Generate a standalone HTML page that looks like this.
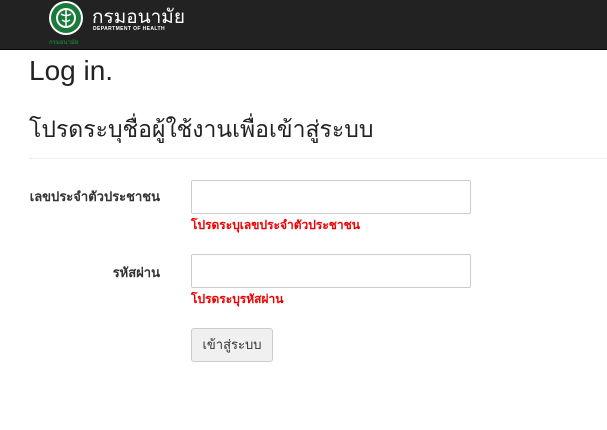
<!DOCTYPE html>
<html><head><meta charset="utf-8"><style>
body{margin:0;width:607px;height:430px;background:#fff;font-family:"Liberation Sans","DejaVu Sans",sans-serif;color:#333;overflow:hidden;position:relative}
.nav{position:absolute;left:0;top:0;width:607px;height:49px;background:#222;border-bottom:1px solid #080808}
.a{position:absolute;white-space:nowrap}
.inp{position:absolute;left:191px;width:278px;height:32px;border:1px solid #ccc;border-radius:2px;background:#fff}
.err{color:#e00;font-size:12px;font-weight:bold}
.lbl{font-size:13px;font-weight:bold;text-align:right;width:140px}
</style></head><body>
<div class="nav">
 <svg class="a" style="left:47px;top:1px" width="40" height="47" viewBox="0 0 40 47">
  <circle cx="19" cy="17" r="17" fill="#fff"/>
  <circle cx="19" cy="17" r="15" fill="#1a7a3a"/>
  <circle cx="19" cy="17" r="10" fill="#fff"/>
  <circle cx="19" cy="17" r="8" fill="#1a7a3a"/>
  <path d="M19 8v18M14 13c3 2 7 2 10 0M15 19c3 2 5 2 8 0" stroke="#fff" stroke-width="1.5" fill="none"/>
  <text x="2" y="43" font-size="6" fill="#1a9a3a" font-family="sans-serif">กรมอนามัย</text>
 </svg>
 <div class="a" style="left:92px;top:2px;color:#fff;font-size:19px">กรมอนามัย</div>
 <div class="a" style="left:93px;top:26px;color:#fff;font-size:5px;font-weight:bold;letter-spacing:.4px">DEPARTMENT OF HEALTH</div>
</div>
<div class="a" style="left:29px;top:55px;font-size:28px;color:#222">Log in.</div>
<div class="a" style="left:29px;top:112px;font-size:23px;color:#222">โปรดระบุชื่อผู้ใช้งานเพื่อเข้าสู่ระบบ</div>
<div class="a" style="left:29px;top:158px;width:578px;height:1px;background:#eee"></div>
<div class="a lbl" style="left:20px;top:186px">เลขประจำตัวประชาชน</div>
<div class="inp" style="top:180px"></div>
<div class="a err" style="left:191px;top:216px">โปรดระบุเลขประจำตัวประชาชน</div>
<div class="a lbl" style="left:20px;top:262px">รหัสผ่าน</div>
<div class="inp" style="top:254px"></div>
<div class="a err" style="left:191px;top:290px">โปรดระบุรหัสผ่าน</div>
<div class="a" style="left:191px;top:328px;width:80px;height:32px;border:1px solid #ccc;border-radius:3px;background:#f0f0f0;font-size:13px;text-align:center;line-height:32px">เข้าสู่ระบบ</div>
</body></html>
